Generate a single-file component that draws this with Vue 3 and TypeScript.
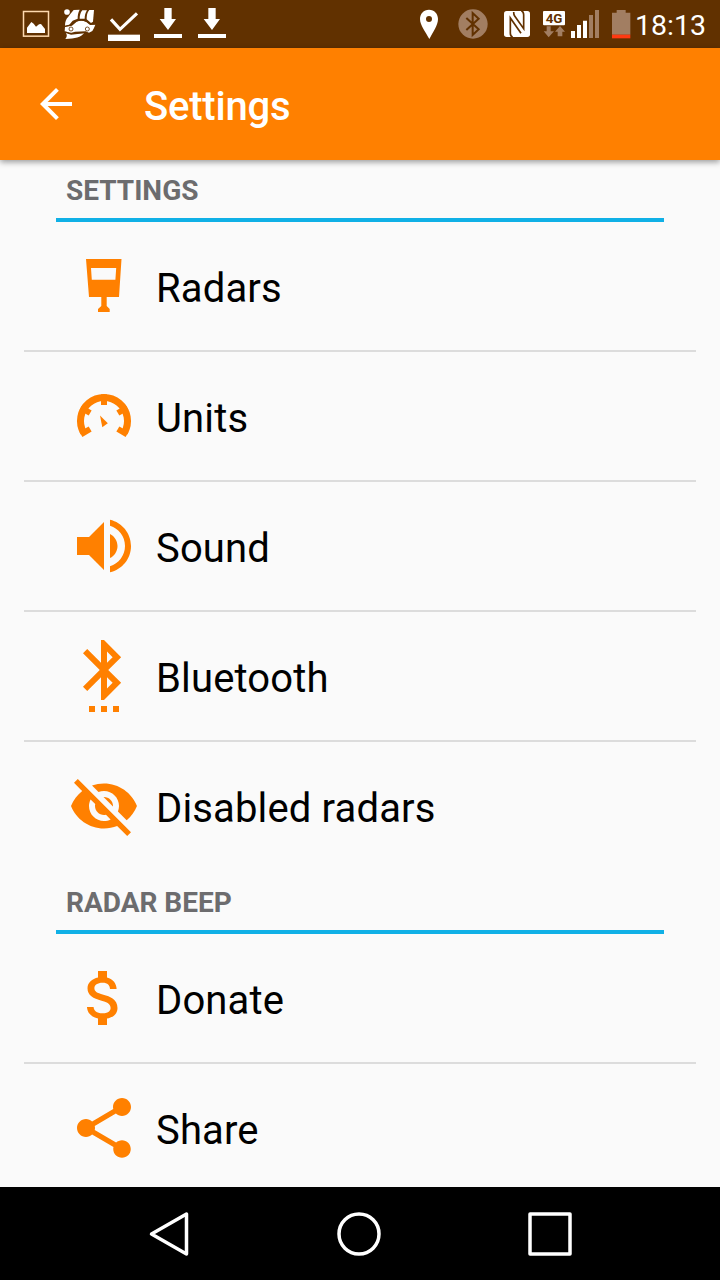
<script setup lang="ts">
interface Item {
  label: string
  icon: string
}
interface Section {
  title: string
  items: Item[]
}

const sections: Section[] = [
  {
    title: 'SETTINGS',
    items: [
      { label: 'Radars', icon: 'radar' },
      { label: 'Units', icon: 'units' },
      { label: 'Sound', icon: 'sound' },
      { label: 'Bluetooth', icon: 'bluetooth' },
      { label: 'Disabled radars', icon: 'hidden' },
    ],
  },
  {
    title: 'RADAR BEEP',
    items: [
      { label: 'Donate', icon: 'donate' },
      { label: 'Share', icon: 'share' },
    ],
  },
]

// 24-unit glyphs
const glyphs: Record<string, string> = {
  sound:
    'M3 9v6h4l5 5V4L7 9H3zm13.5 3c0-1.77-1.02-3.29-2.5-4.03v8.05c1.48-.73 2.5-2.25 2.5-4.02zM14 3.23v2.06c2.89.86 5 3.54 5 6.71s-2.11 5.85-5 6.71v2.06c4.01-.91 7-4.49 7-8.77s-2.99-7.86-7-8.77z',
  bluetooth:
    'M11 24h2v-2h-2v2zm-4 0h2v-2H7v2zm8 0h2v-2h-2v2zm2.71-18.29L12 0h-1v7.59L6.41 3 5 4.41 10.59 10 5 15.59 6.41 17 11 12.41V20h1l5.71-5.71-4.3-4.29 4.3-4.29zM13 3.83l1.88 1.88L13 7.59V3.83zm1.88 10.46L13 16.17v-3.76l1.88 1.88z',
  hidden:
    'M12 7c2.76 0 5 2.24 5 5 0 .65-.13 1.26-.36 1.83l2.92 2.92c1.51-1.26 2.7-2.89 3.43-4.75-1.73-4.39-6-7.5-11-7.5-1.4 0-2.74.25-3.98.7l2.16 2.16C10.74 7.13 11.35 7 12 7zM2 4.27l2.28 2.28.46.46C3.08 8.3 1.78 10.02 1 12c1.73 4.39 6 7.5 11 7.5 1.55 0 3.03-.3 4.38-.84l.42.42L19.73 22 21 20.73 3.27 3 2 4.27zM7.53 9.8l1.55 1.55c-.05.21-.08.43-.08.65 0 1.66 1.34 3 3 3 .22 0 .44-.03.65-.08l1.55 1.55c-.67.33-1.41.53-2.2.53-2.76 0-5-2.24-5-5 0-.79.2-1.53.53-2.2zm4.31-.78l3.15 3.15.02-.16c0-1.66-1.34-3-3-3l-.17.01z',
  donate:
    'M11.8 10.9c-2.27-.59-3-1.2-3-2.15 0-1.09 1.01-1.85 2.7-1.85 1.78 0 2.44.85 2.5 2.1h2.21c-.07-1.72-1.12-3.3-3.21-3.81V3h-3v2.16c-1.94.42-3.5 1.68-3.5 3.61 0 2.31 1.91 3.46 4.7 4.13 2.5.6 3 1.48 3 2.41 0 .69-.49 1.79-2.7 1.79-2.06 0-2.87-.92-2.98-2.1h-2.2c.12 2.19 1.76 3.42 3.68 3.83V21h3v-2.15c1.95-.37 3.5-1.5 3.5-3.55 0-2.84-2.43-3.81-4.7-4.4z',
  share:
    'M18 16.08c-.76 0-1.44.3-1.96.77L8.91 12.7c.05-.23.09-.46.09-.7s-.04-.47-.09-.7l7.05-4.11c.54.5 1.25.81 2.04.81 1.66 0 3-1.34 3-3s-1.34-3-3-3-3 1.34-3 3c0 .24.04.47.09.7L8.04 9.81C7.5 9.31 6.79 9 6 9c-1.66 0-3 1.34-3 3s1.34 3 3 3c.79 0 1.5-.31 2.04-.81l7.12 4.16c-.05.21-.08.43-.08.65 0 1.61 1.31 2.92 2.92 2.92 1.61 0 2.92-1.31 2.92-2.92s-1.31-2.92-2.92-2.92z',
}

const tickAngles = [-120, -60, 0, 60, 120]
</script>

<template>
  <div class="screen">
    <header class="status">
      <div class="notes">
        <svg class="cell" viewBox="42 0 132 144">
          <rect x="70.500" y="34.500" width="75" height="74" fill="none" stroke="#ffd9ae" stroke-width="4.500" />
          <path d="M81 99V83l13-17 7 5 7 9 9-7 6-1 12 15v12z" fill="#fff" />
        </svg>
        <svg class="cell" viewBox="174 0 132 144">
          <g fill="#fff">
            <circle cx="201" cy="36" r="8.500" />
            <path d="M195 77c0-12 3-20 10-27 7-9 12-16 16-20l18-1c-5 9-6 18-6 27l-15 6-10 12z" />
            <path d="M247 31h14c-5 8-7 16-7 25h-15c0-9 2-18 8-25z" />
            <path d="M268 30h14l-3 35-6 4-13-11c0-11 1-20 8-28z" />
            <path d="M195 81l21-4 14-12c10-4 20-3 29 1l11 9 16-1-4 10-5 9-10 5-10-4-32 1-11 4-20-5z" />
            <path d="M198 99l15 5 39-4c-9 11-26 17-56 17 5-6 6-11 2-18z" />
          </g>
          <g fill="none" stroke="#613100" stroke-width="2.500">
            <path d="M195 79l20-5 14-11c11-4 22-3 31 2l11 7h15" />
            <circle cx="213" cy="87" r="6" />
            <circle cx="262" cy="87" r="6" />
            <path d="M196 96l13 4 40-2" />
          </g>
        </svg>
        <svg class="cell" viewBox="306 0 132 144">
          <path d="M333 58l27 30 51-48" fill="none" stroke="#fff" stroke-width="9.500" />
          <rect x="324" y="104" width="96" height="19" fill="#fff" />
        </svg>
        <svg v-for="n in 2" :key="n" class="cell" viewBox="438 0 132 144">
          <path d="M493 24h22v33h13l-24 33-25-33h14zM462 102h84v12h-84z" fill="#fff" />
        </svg>
      </div>
      <div class="system">
        <svg class="cell" viewBox="21 0 132 144">
          <path fill-rule="evenodd" d="M87 29c-16 0-27 12-27 28 0 19 17 39 28 60 11-21 26-41 26-60 0-16-11-28-27-28zm0 19a9 9 0 1 1 0 18 9 9 0 0 1 0-18z" fill="#fff" />
        </svg>
        <svg class="cell" viewBox="153 0 132 144">
          <circle cx="219" cy="72" r="44" fill="#a27e62" />
          <path d="M199 54l37 34-18 17V39l18 17-37 34" fill="none" stroke="#613100" stroke-width="6" />
        </svg>
        <svg class="cell" viewBox="285 0 132 144">
          <rect x="312" y="33" width="78" height="78" rx="8" fill="#fff" />
          <path d="M338 112q-7-3-7-12V54l32 46M364 32q7 3 7 12v42L344 48q-3-4-3-12" fill="none" stroke="#613100" stroke-width="5" />
        </svg>
        <svg class="network" viewBox="417 0 198 144">
          <rect x="429" y="33" width="66" height="43" rx="3" fill="#fff" />
          <text x="462" y="69" text-anchor="middle" class="tech">4G</text>
          <path d="M440 79h12v15h10l-16 18-15-18h9zM473 109V95h-8l15-17 15 17h-8v14z" fill="#a27e62" />
          <path d="M513 93h12v21h-12zM531 75h12v39h-12zM549 62h12v52h-12z" fill="#fff" />
          <path d="M567 45h12v69h-12zM585 30h12v84h-12z" fill="#a27e62" />
        </svg>
        <svg class="battery" viewBox="615 0 90 144">
          <path d="M650 30h27v8h14v66h-55V38h14z" fill="#a27e62" />
          <rect x="636" y="104" width="55" height="11" fill="#ff3a12" />
        </svg>
        <span class="clock">18:13</span>
      </div>
    </header>

    <div class="appbar">
      <svg class="back" viewBox="0 0 24 24">
        <path d="M20 11H7.830l5.590-5.590L12 4l-8 8 8 8 1.410-1.410L7.830 13H20v-2z" fill="#fff" />
      </svg>
      <h1>Settings</h1>
    </div>

    <main>
      <section v-for="section in sections" :key="section.title">
        <h2>{{ section.title }}</h2>
        <ul>
          <li v-for="item in section.items" :key="item.label">
            <svg v-if="item.icon === 'radar'" class="icon" viewBox="0 0 72 72">
              <path fill-rule="evenodd" d="M18 9h35.500L51 47H38.700v9l3 3v3H30v-3l3.300-3v-9H21zM23 18l.8 11.800h23.600L48.200 18z" />
            </svg>
            <svg v-else-if="item.icon === 'units'" class="icon" viewBox="0 0 72 72">
              <path d="M15.650 52.750A23.500 23.500 0 1 1 56.350 52.750" fill="none" stroke="#ff8000" stroke-width="7" />
              <rect v-for="a in tickAngles" :key="a" x="33" y="14.300" width="6" height="10.700" :transform="`rotate(${a} 36 41)`" />
              <path d="M32 35.500l7.800 7.800-5.500 3.900z" />
            </svg>
            <svg v-else class="icon" viewBox="0 0 24 24">
              <path :d="glyphs[item.icon]" />
            </svg>
            <span>{{ item.label }}</span>
          </li>
        </ul>
      </section>
    </main>

    <nav>
      <svg viewBox="0 0 46 46"><path d="M5.500 23L40.500 3v40z" /></svg>
      <svg viewBox="0 0 46 46"><circle cx="22" cy="23" r="20" /></svg>
      <svg viewBox="0 0 46 46"><rect x="3" y="3" width="40" height="40" /></svg>
    </nav>
  </div>
</template>

<style>
body {
  margin: 0;
  overflow: hidden;
}
</style>

<style scoped>
.screen {
  display: flex;
  flex-direction: column;
  width: 720px;
  height: 1280px;
  overflow: hidden;
  background: #fafafa;
  font-family: Roboto, "Liberation Sans", sans-serif;
}
.status {
  flex: none;
  display: flex;
  justify-content: space-between;
  height: 48px;
  padding-left: 14px;
  background: #613100;
}
.notes,
.system {
  display: flex;
}
.cell {
  width: 44px;
  height: 48px;
}
.network {
  width: 66px;
  height: 48px;
}
.battery {
  width: 30px;
  height: 48px;
}
.tech {
  font: 700 40px Roboto, sans-serif;
  fill: #613100;
}
.clock {
  width: 85px;
  line-height: 52px;
  font-size: 28.5px;
  color: #fff;
}
.appbar {
  flex: none;
  position: relative;
  z-index: 1;
  display: flex;
  align-items: center;
  gap: 64px;
  height: 112px;
  padding-left: 32px;
  background: #ff8000;
  box-shadow: 0 2px 6px rgba(0, 0, 0, 0.4);
}
.back {
  width: 48px;
  height: 48px;
}
h1 {
  margin: 0;
  padding-top: 6px;
  font-size: 40px;
  font-weight: 500;
  line-height: 48px;
  letter-spacing: -0.2px;
  color: #fff;
}
main {
  flex: 1;
  min-height: 0;
  margin-top: -2px;
  overflow: hidden;
}
h2 {
  height: 60px;
  margin: 0 56px;
  padding-left: 10px;
  border-bottom: 4px solid #10b0e6;
  font-size: 28px;
  font-weight: 700;
  line-height: 66px;
  color: #6c6c6e;
}
ul {
  margin: 0 24px;
  padding: 0;
  list-style: none;
}
li {
  display: flex;
  align-items: center;
  gap: 16px;
  height: 128px;
  padding-left: 44px;
  font-size: 40px;
  line-height: 48px;
  letter-spacing: 0.15px;
  color: #000;
}
li + li {
  border-top: 2px solid #dcdcdc;
}
li span {
  padding-top: 6px;
}
.icon {
  width: 72px;
  height: 72px;
  fill: #ff8000;
}
nav {
  flex: none;
  display: flex;
  justify-content: space-between;
  align-items: center;
  height: 93px;
  padding: 0 147px 0 146px;
  box-sizing: border-box;
  background: #000;
}
nav svg {
  width: 46px;
  height: 46px;
  fill: none;
  stroke: #fff;
  stroke-width: 3.5;
  stroke-linejoin: round;
}
</style>
